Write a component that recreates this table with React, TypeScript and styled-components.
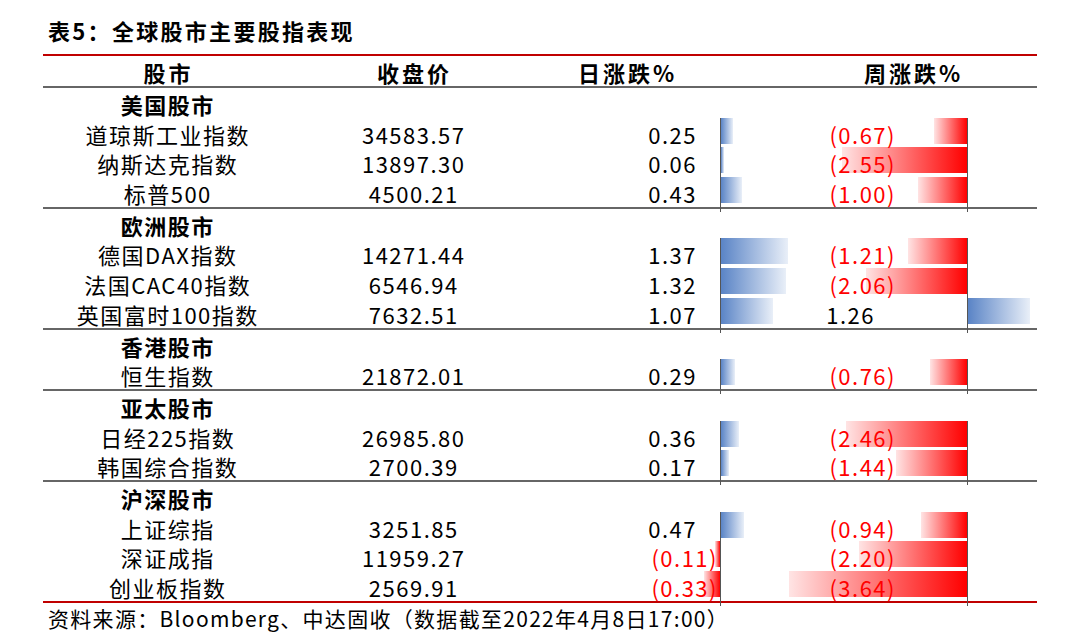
import React from 'react';
import styled, { createGlobalStyle } from 'styled-components';

const Global = createGlobalStyle`
  html, body { margin: 0; padding: 0; background: #fff; }
  body { font-family: "Noto Sans CJK SC", "Noto Sans", sans-serif; color: #000; }
`;

const COLS = '248px 244px 182px 70px 250px';
const SCALE = 49;

const Page = styled.div`
  width: 1080px;
  height: 634px;
  box-sizing: border-box;
  padding: 15px 0 0 43px;
  overflow: hidden;
`;

const Title = styled.h1`
  margin: 0 0 9px 5px;
  font-size: 22px;
  line-height: 30px;
  font-weight: 700;
  letter-spacing: 2.3px;
`;

const Table = styled.div`
  width: 994px;
  border-top: 2px solid #c00000;
  border-bottom: 2px solid #c00000;
`;

const HeaderRow = styled.div`
  display: grid;
  grid-template-columns: ${COLS};
  height: 30px;
  align-items: center;
  border-bottom: 2px solid #666;
`;

const HeadCell = styled.div<{ $col: string }>`
  grid-column: ${p => p.$col};
  text-align: center;
  font-size: 22px;
  font-weight: 700;
  letter-spacing: 3px;
  padding-left: 3px;
  margin-bottom: 2px;
`;

const Section = styled.div`
  border-bottom: 2px solid #666;
  &:last-child { border-bottom: none; }
`;

const Row = styled.div`
  display: grid;
  grid-template-columns: ${COLS};
  height: 29.7px;
  align-items: center;
  font-size: 22px;
  letter-spacing: 1.5px;
`;

const CategoryName = styled.div`
  grid-column: 1;
  text-align: center;
  font-weight: 700;
  padding-left: 1.5px;
  margin-bottom: 3px;
`;

const Name = styled.div`
  text-align: center;
  white-space: nowrap;
  padding-left: 1.5px;
  margin-bottom: 3px;
`;

const Close = styled.div`
  text-align: center;
  padding-left: 1.5px;
  margin-bottom: 3px;
`;

const ChangeCell = styled.div<{ $span: string; $pad: number }>`
  grid-column: ${p => p.$span};
  position: relative;
  height: 100%;
  display: flex;
  align-items: center;
  justify-content: flex-end;
  padding-right: ${p => p.$pad}px;
`;

const Axis = styled.div<{ $x: number }>`
  position: absolute;
  left: ${p => p.$x}px;
  top: 0;
  bottom: 0;
  width: 1px;
  background: #555;
`;

const Bar = styled.div<{ $neg: boolean }>`
  position: absolute;
  top: 0;
  height: 26px;
  background: ${p =>
    p.$neg
      ? 'linear-gradient(to left, #ff0000 0%, #ffe4e4 100%)'
      : 'linear-gradient(to right, #5a84c6 0%, #e9eff8 100%)'};
`;

const Value = styled.span<{ $neg: boolean }>`
  position: relative;
  z-index: 1;
  color: ${p => (p.$neg ? '#ff0000' : '#000')};
  padding-right: ${p => (p.$neg ? 0 : 21)}px;
  margin-bottom: 3px;
`;

const Footer = styled.div`
  padding-left: 5px;
  font-size: 21px;
  line-height: 30px;
  letter-spacing: 1.3px;
  white-space: nowrap;
`;

type DataRow = [string, string, number, number];
const sections: { name: string; rows: DataRow[] }[] = [
  {
    name: '美国股市',
    rows: [
      ['道琼斯工业指数', '34583.57', 0.25, -0.67],
      ['纳斯达克指数', '13897.30', 0.06, -2.55],
      ['标普500', '4500.21', 0.43, -1.0],
    ],
  },
  {
    name: '欧洲股市',
    rows: [
      ['德国DAX指数', '14271.44', 1.37, -1.21],
      ['法国CAC40指数', '6546.94', 1.32, -2.06],
      ['英国富时100指数', '7632.51', 1.07, 1.26],
    ],
  },
  {
    name: '香港股市',
    rows: [['恒生指数', '21872.01', 0.29, -0.76]],
  },
  {
    name: '亚太股市',
    rows: [
      ['日经225指数', '26985.80', 0.36, -2.46],
      ['韩国综合指数', '2700.39', 0.17, -1.44],
    ],
  },
  {
    name: '沪深股市',
    rows: [
      ['上证综指', '3251.85', 0.47, -0.94],
      ['深证成指', '11959.27', -0.11, -2.2],
      ['创业板指数', '2569.91', -0.33, -3.64],
    ],
  },
];

const fmt = (v: number) => (v < 0 ? `(${Math.abs(v).toFixed(2)})` : v.toFixed(2));

const Change: React.FC<{ v: number; span: string; pad: number; axis: number }> = ({ v, span, pad, axis }) => {
  const neg = v < 0;
  const w = Math.abs(v) * SCALE;
  const left = neg ? axis - w : axis + 1;
  return (
    <ChangeCell $span={span} $pad={pad}>
      <Bar $neg={neg} style={{ left, width: w }} />
      <Axis $x={axis} />
      <Value $neg={neg}>{fmt(v)}</Value>
    </ChangeCell>
  );
};

export default function App() {
  return (
    <>
      <Global />
      <Page>
        <Title>表5：全球股市主要股指表现</Title>
        <Table>
          <HeaderRow>
            <HeadCell $col="1">股市</HeadCell>
            <HeadCell $col="2">收盘价</HeadCell>
            <HeadCell $col="3">日涨跌%</HeadCell>
            <HeadCell $col="5">周涨跌%</HeadCell>
          </HeaderRow>
          {sections.map(s => (
            <Section key={s.name}>
              <Row>
                <CategoryName>{s.name}</CategoryName>
              </Row>
              {s.rows.map(([name, close, d, w]) => (
                <Row key={name}>
                  <Name>{name}</Name>
                  <Close>{close}</Close>
                  <Change v={d} span="3 / 5" pad={69} axis={185} />
                  <Change v={w} span="5" pad={141} axis={180} />
                </Row>
              ))}
            </Section>
          ))}
        </Table>
        <Footer>资料来源：Bloomberg、中达固收（数据截至2022年4月8日17:00）</Footer>
      </Page>
    </>
  );
}
